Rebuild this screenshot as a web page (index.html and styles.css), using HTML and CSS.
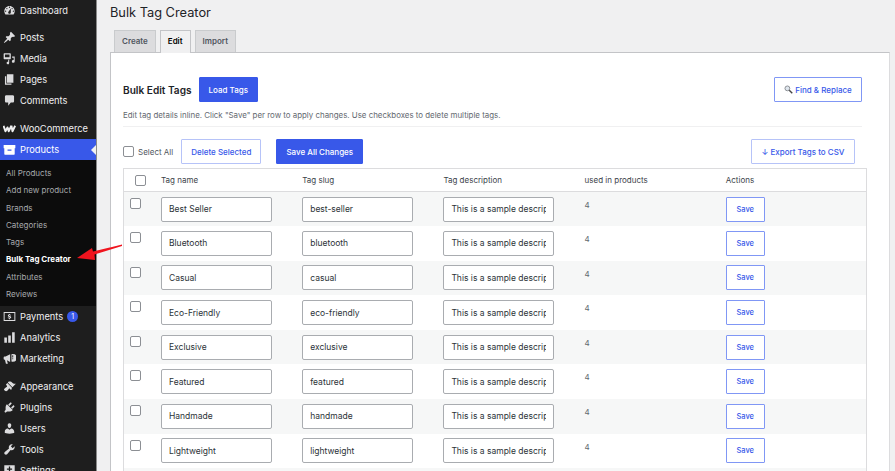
FILE: index.html
```html
<!DOCTYPE html>
<html lang="en">
<head>
    <meta charset="UTF-8">
    <meta name="viewport" content="width=device-width, initial-scale=1.0">
    <title>Bulk Tag Creator</title>
    <link rel="stylesheet" href="styles.css">
</head>
<body>
    <!-- Admin menu -->
    <nav class="sidebar">
        <ul class="menu">
            <li class="menu-item first">
                <svg class="icon" viewBox="0 0 20 20"><path fill-rule="evenodd" d="M3.76 16h12.48c1.1-1.37 1.76-3.11 1.76-5 0-4.42-3.58-8-8-8s-8 3.58-8 8c0 1.89.66 3.63 1.76 5zM10 4c.55 0 1 .45 1 1s-.45 1-1 1-1-.45-1-1 .45-1 1-1zM6 6c.55 0 1 .45 1 1s-.45 1-1 1-1-.45-1-1 .45-1 1-1zm8 0c.55 0 1 .45 1 1s-.45 1-1 1-1-.45-1-1 .45-1 1-1zm-5.37 5.55L12 7v6c0 1.1-.9 2-2 2s-2-.9-2-2c0-.57.24-1.08.63-1.45zM4 10c.55 0 1 .45 1 1s-.45 1-1 1-1-.45-1-1 .45-1 1-1zm12 0c.55 0 1 .45 1 1s-.45 1-1 1-1-.45-1-1 .45-1 1-1z"/></svg>
                Dashboard
            </li>
            <li class="menu-item gap">
                <svg class="icon" viewBox="0 0 20 20"><path d="M10.44 3.02l1.82-1.82 6.36 6.35-1.83 1.82c-1.05-.68-2.48-.57-3.41.36l-.75.75c-.92.93-1.04 2.35-.35 3.41l-1.83 1.82-2.41-2.41-2.8 2.79c-.42.42-3.38 2.71-3.8 2.29s1.86-3.39 2.28-3.81l2.79-2.79L4.1 9.36l1.83-1.82c1.05.69 2.48.57 3.4-.36l.75-.75c.93-.92 1.05-2.35.36-3.41z"/></svg>
                Posts
            </li>
            <li class="menu-item">
                <svg class="icon" viewBox="0 0 20 20"><path fill-rule="evenodd" d="M2 2h9a1 1 0 0 1 1 1v7a1 1 0 0 1-1 1H2a1 1 0 0 1-1-1V3a1 1 0 0 1 1-1zm1 2v4h7V4zM14 7h4v7.500a2.200 2.200 0 1 1-1.600-2.100V9H14zM9.500 12v5a2 2 0 1 1-1.500-1.900V12z"/></svg>
                Media
            </li>
            <li class="menu-item">
                <svg class="icon" viewBox="0 0 20 20"><path d="M6 15V2h10v13H6zm-1 1h8v2H3V5h2v11z"/></svg>
                Pages
            </li>
            <li class="menu-item">
                <svg class="icon" viewBox="0 0 20 20"><path d="M5 2h10c1.100 0 2 .9 2 2v7c0 1.100-.9 2-2 2h-3l-4 5v-5H5c-1.100 0-2-.9-2-2V4c0-1.100.9-2 2-2z"/></svg>
                Comments
            </li>
            <li class="menu-item gap">
                <svg class="icon" viewBox="0 0 24 24"><path d="M1 7l3.500 10 3.800-7 2.200 7 5-10M15.500 7l2 10 5-10" fill="none" stroke="#f0f0f1" stroke-width="3.600" stroke-linejoin="round"/></svg>
                WooCommerce
            </li>
            <li class="menu-item current">
                <svg class="icon" viewBox="0 0 20 20"><path fill-rule="evenodd" d="M1 3h18v5h-1v9a1 1 0 0 1-1 1H3a1 1 0 0 1-1-1V8H1zm6 7v2h6v-2z"/></svg>
                Products
            </li>
        </ul>

        <!-- Products submenu -->
        <ul class="submenu">
            <li>All Products</li>
            <li>Add new product</li>
            <li>Brands</li>
            <li>Categories</li>
            <li>Tags</li>
            <li class="active">Bulk Tag Creator</li>
            <li>Attributes</li>
            <li>Reviews</li>
        </ul>

        <ul class="menu">
            <li class="menu-item">
                <svg class="icon" viewBox="0 0 20 20"><path fill-rule="evenodd" d="M1 3h18v14H1zm1.500 1.500v11h15v-11zM9.300 6h1.400v1c.8.100 1.400.4 1.800.8l-.8 1c-.5-.4-1-.6-1.700-.6-.6 0-.9.200-.9.500 0 .4.400.5 1.300.7 1.300.3 2.200.7 2.200 1.900 0 1-.7 1.700-1.900 1.800v1H9.300v-1c-1-.1-1.700-.5-2.200-1l.8-1c.6.500 1.200.8 2 .8.600 0 1-.2 1-.6s-.4-.5-1.300-.7c-1.300-.3-2.100-.7-2.100-1.800 0-1 .7-1.700 1.800-1.800z"/></svg>
                Payments
                <span class="badge">1</span>
            </li>
            <li class="menu-item">
                <svg class="icon" viewBox="0 0 20 20"><path d="M18 18V2h-4v16h4zm-6 0V7H8v11h4zm-6 0v-8H2v8h4z"/></svg>
                Analytics
            </li>
            <li class="menu-item">
                <svg class="icon" viewBox="0 0 20 20"><path fill-rule="evenodd" d="M11 3.500L4 7H2.500A1.500 1.500 0 0 0 1 8.500v2A1.500 1.500 0 0 0 2.500 12H3l1.500 6h3L6 12.700l5 2.800zM15 3a6 6 0 0 1 0 12 6 6 0 0 1-2-.4V3.400A6 6 0 0 1 15 3zm-.7 2v3.500h1.400V5zm0 4.500V11h1.400V9.500z"/></svg>
                Marketing
            </li>
            <li class="menu-item gap">
                <svg class="icon" viewBox="0 0 20 20"><path d="M14.480 11.060L7.410 3.990l1.500-1.500c.5-.56 2.300-.47 3.510.32 1.210.8 1.430 1.280 2.910 2.100 1.180.64 2.450 1.260 4.450.85zm-.71.71L6.700 4.700 4.930 6.470c-.39.39-.39 1.020 0 1.410l1.060 1.060c.39.39.39 1.030 0 1.420-.6.6-1.430 1.110-2.210 1.690-.35.26-.7.53-1.010.84C1.430 13.230 1 14.690 2.620 16.300s2.870 1.200 4.200.02c.19-.18.39-.4.58-.6.6-.8 1.100-1.630 1.700-2.230.39-.39 1.030-.39 1.420 0l1.060 1.060c.39.39 1.020.39 1.410 0z"/></svg>
                Appearance
            </li>
            <li class="menu-item">
                <svg class="icon" viewBox="0 0 20 20"><path d="M13.110 4.360L9.870 7.600 8 5.730l3.240-3.240c.35-.34 1.050-.2 1.560.32.520.51.660 1.210.310 1.550zm-8 1.770l.91-1.120 9.010 9.010-1.190.84c-.71.71-2.630 1.160-3.820 1.160H6.140L4.900 17.260c-.59.59-1.540.59-2.120 0-.59-.58-.59-1.530 0-2.120l1.240-1.240v-3.880c0-1.130.4-3.190 1.090-3.890zm7.260 3.970l3.240-3.240c.34-.35 1.040-.21 1.550.31.520.51.660 1.210.310 1.550l-3.240 3.250z"/></svg>
                Plugins
            </li>
            <li class="menu-item">
                <svg class="icon" viewBox="0 0 20 20"><path d="M10 9.250c-2.270 0-2.730-3.440-2.730-3.440C7 4.020 7.820 2 9.970 2c2.160 0 2.980 2.020 2.710 3.810 0 0-.41 3.440-2.680 3.440zm0 2.570L12.720 10c2.390 0 4.520 2.330 4.520 4.530v2.490s-3.650 1.130-7.240 1.130c-3.650 0-7.240-1.130-7.240-1.130v-2.490c0-2.250 1.940-4.480 4.470-4.480z"/></svg>
                Users
            </li>
            <li class="menu-item">
                <svg class="icon" viewBox="0 0 20 20"><path d="M16.680 9.770c-1.340 1.340-3.300 1.670-4.950.99l-5.410 6.520c-.99.99-2.590.99-3.580 0s-.99-2.590 0-3.570l6.520-5.420c-.68-1.650-.35-3.610.99-4.950 1.280-1.280 3.120-1.620 4.720-1.060l-2.890 2.890 2.820 2.820 2.860-2.870c.53 1.580.18 3.390-1.080 4.650z"/></svg>
                Tools
            </li>
            <li class="menu-item">
                <svg class="icon" viewBox="0 0 20 20"><path fill-rule="evenodd" d="M2 2h16v16H2zm7 2v3H6v2h3v3h2V9h3V7h-3V4z"/></svg>
                Settings
            </li>
        </ul>
    </nav>

    <!-- Main Content -->
    <main class="content">
        <h1 class="page-title">Bulk Tag Creator</h1>

        <div class="tabs">
            <a class="tab">Create</a>
            <a class="tab tab-active">Edit</a>
            <a class="tab">Import</a>
        </div>

        <section class="panel">
            <div class="panel-head">
                <h2>Bulk Edit Tags</h2>
                <button class="btn btn-primary">Load Tags</button>
                <button class="btn btn-outline push-right find-btn">
                    <svg class="search-icon" viewBox="0 0 12 12"><circle cx="4.500" cy="4.500" r="3.200" fill="#dfe6ee" stroke="#8b8f94" stroke-width="1.300"/><path d="M7 7l4 4" stroke="#444" stroke-width="1.800"/></svg>
                    Find &amp; Replace
                </button>
            </div>
            <p class="hint">Edit tag details inline. Click "Save" per row to apply changes. Use checkboxes to delete multiple tags.</p>

            <div class="toolbar">
                <label class="select-all"><input type="checkbox" class="check"> Select All</label>
                <button class="btn btn-light">Delete Selected</button>
                <button class="btn btn-primary save-all">Save All Changes</button>
                <button class="btn btn-light push-right export-btn">↓ Export Tags to CSV</button>
            </div>

            <table class="tag-table">
                <thead>
                    <tr>
                        <th class="col-check"><input type="checkbox" class="check head-check"></th>
                        <th>Tag name</th>
                        <th>Tag slug</th>
                        <th>Tag description</th>
                        <th>used in products</th>
                        <th>Actions</th>
                    </tr>
                </thead>
                <tbody>
                    <tr>
                        <td class="col-check"><input type="checkbox" class="check"></td>
                        <td><input class="field" type="text" value="Best Seller"></td>
                        <td><input class="field" type="text" value="best-seller"></td>
                        <td><input class="field" type="text" value="This is a sample description"></td>
                        <td class="count">4</td>
                        <td><button class="btn-save">Save</button></td>
                    </tr>
                    <tr>
                        <td class="col-check"><input type="checkbox" class="check"></td>
                        <td><input class="field" type="text" value="Bluetooth"></td>
                        <td><input class="field" type="text" value="bluetooth"></td>
                        <td><input class="field" type="text" value="This is a sample description"></td>
                        <td class="count">4</td>
                        <td><button class="btn-save">Save</button></td>
                    </tr>
                    <tr>
                        <td class="col-check"><input type="checkbox" class="check"></td>
                        <td><input class="field" type="text" value="Casual"></td>
                        <td><input class="field" type="text" value="casual"></td>
                        <td><input class="field" type="text" value="This is a sample description"></td>
                        <td class="count">4</td>
                        <td><button class="btn-save">Save</button></td>
                    </tr>
                    <tr>
                        <td class="col-check"><input type="checkbox" class="check"></td>
                        <td><input class="field" type="text" value="Eco-Friendly"></td>
                        <td><input class="field" type="text" value="eco-friendly"></td>
                        <td><input class="field" type="text" value="This is a sample description"></td>
                        <td class="count">4</td>
                        <td><button class="btn-save">Save</button></td>
                    </tr>
                    <tr>
                        <td class="col-check"><input type="checkbox" class="check"></td>
                        <td><input class="field" type="text" value="Exclusive"></td>
                        <td><input class="field" type="text" value="exclusive"></td>
                        <td><input class="field" type="text" value="This is a sample description"></td>
                        <td class="count">4</td>
                        <td><button class="btn-save">Save</button></td>
                    </tr>
                    <tr>
                        <td class="col-check"><input type="checkbox" class="check"></td>
                        <td><input class="field" type="text" value="Featured"></td>
                        <td><input class="field" type="text" value="featured"></td>
                        <td><input class="field" type="text" value="This is a sample description"></td>
                        <td class="count">4</td>
                        <td><button class="btn-save">Save</button></td>
                    </tr>
                    <tr>
                        <td class="col-check"><input type="checkbox" class="check"></td>
                        <td><input class="field" type="text" value="Handmade"></td>
                        <td><input class="field" type="text" value="handmade"></td>
                        <td><input class="field" type="text" value="This is a sample description"></td>
                        <td class="count">4</td>
                        <td><button class="btn-save">Save</button></td>
                    </tr>
                    <tr>
                        <td class="col-check"><input type="checkbox" class="check"></td>
                        <td><input class="field" type="text" value="Lightweight"></td>
                        <td><input class="field" type="text" value="lightweight"></td>
                        <td><input class="field" type="text" value="This is a sample description"></td>
                        <td class="count">4</td>
                        <td><button class="btn-save">Save</button></td>
                    </tr>
                    <tr>
                        <td colspan="6" class="row-more"></td>
                    </tr>
                </tbody>
            </table>
        </section>
    </main>

    <!-- Red annotation arrow over the screenshot -->
    <svg class="annotation" viewBox="0 0 48 18"><path d="M1 15L16 5l1 3.500L46 1.500V3L18.500 11.500 19 17z" fill="#f0141e"/></svg>
</body>
</html>
```

FILE: styles.css
```css
/* General Styles */
* {
    margin: 0;
    padding: 0;
    box-sizing: border-box;
}

html, body {
    height: 471px;
    overflow: hidden;
}

body {
    display: flex;
    position: relative;
    background: #f0f0f1;
    font-family: Inter, "Liberation Sans", sans-serif;
    color: #3c434a;
}

/* Admin menu */
.sidebar {
    width: 97px;
    flex-shrink: 0;
    height: 471px;
    overflow: hidden;
    background: #1e1e1e;
    border-right: 1px solid #8a8a8a;
}

.sidebar ul {
    list-style: none;
}

.menu-item {
    display: flex;
    align-items: center;
    height: 21px;
    padding-left: 3px;
    position: relative;
    font-size: 9.300px;
    color: #f0f0f1;
}

.menu-item.gap {
    margin-top: 7px;
}

.menu-item.first {
    height: 20px;
}

.icon {
    width: 13px;
    height: 13px;
    margin-right: 4px;
    flex-shrink: 0;
    fill: #dcdcde;
}

.menu-item.current {
    background: #3858e9;
    color: #fff;
}

.menu-item.current .icon {
    fill: #fff;
}

/* little notch pointing at the content */
.menu-item.current::after {
    content: "";
    position: absolute;
    right: 0;
    top: 5.500px;
    border: 5px solid transparent;
    border-right-color: #f0f0f1;
    border-left-width: 0;
}

.badge {
    display: block;
    width: 11px;
    height: 11px;
    margin-left: 4px;
    border-radius: 50%;
    background: #3858e9;
    color: #fff;
    font-size: 7px;
    line-height: 11px;
    text-align: center;
}

.submenu {
    background: #0c0c0c;
    padding: 5px 0 3px;
}

.submenu li {
    height: 17.300px;
    line-height: 17.300px;
    padding-left: 6px;
    font-size: 8px;
    color: #a7aaad;
}

.submenu li.active {
    color: #fff;
    font-weight: 700;
}

/* Page content */
.content {
    flex: 1;
    min-width: 0;
    padding: 0 5px 0 13px;
}

.page-title {
    font-size: 12.800px;
    font-weight: 400;
    line-height: 18px;
    padding-top: 4px;
    color: #1d2327;
}

.tabs {
    display: flex;
    gap: 4px;
    margin: 8px 0 0 4px;
    height: 22px;
}

.tab {
    display: block;
    padding: 0 7px;
    font-size: 8px;
    font-weight: 600;
    line-height: 21px;
    background: #dcdcde;
    border: 1px solid #c9cbcd;
    border-bottom: none;
    color: #50575e;
}

.tab-active {
    background: #f0f0f1;
    color: #000;
    border-color: #c3c4c7;
    height: 23px;
    position: relative;
    z-index: 1;
}

.panel {
    background: #fff;
    border: 1px solid #c3c4c7;
    border-right-color: #dcdcde;
    padding: 24px 27px 0 12px;
    height: 450px;
    overflow: hidden;
}

.panel-head {
    display: flex;
    align-items: center;
    gap: 7px;
}

.panel-head h2 {
    font-size: 10.100px;
    font-weight: 600;
    color: #1d2327;
}

.push-right {
    margin-left: auto;
}

/* Buttons */
.btn {
    height: 25px;
    font-family: inherit;
    font-size: 8px;
    font-weight: 500;
    border-radius: 1px;
    padding: 0 9px;
    white-space: nowrap;
    cursor: pointer;
}

.btn-primary {
    background: #3858e9;
    border: 1px solid #3858e9;
    color: #fff;
}

.btn-outline {
    background: #fff;
    border: 1px solid #8097f5;
    color: #3858e9;
}

.btn-light {
    background: #fff;
    border: 1px solid #b6c3f8;
    color: #3858e9;
}

.find-btn {
    display: flex;
    align-items: center;
    gap: 2px;
    width: 88px;
    padding: 0;
    justify-content: center;
}

.search-icon {
    width: 9px;
    height: 9px;
}

.hint {
    margin-top: 8px;
    padding-bottom: 6px;
    border-bottom: 1px solid #f0f0f1;
    font-size: 7.900px;
    color: #646970;
}

.toolbar {
    display: flex;
    align-items: center;
    margin-top: 12px;
}

.select-all {
    display: flex;
    align-items: center;
    gap: 4px;
    font-size: 8px;
    color: #50575e;
    margin-right: 8px;
}

.save-all {
    margin-left: 15px;
}

.export-btn {
    margin-right: 7px;
    width: 104px;
    padding: 0;
}

.check {
    appearance: none;
    width: 11px;
    height: 11px;
    background: #fff;
    border: 1px solid #8c8f94;
    border-radius: 2px;
    display: block;
}

/* Tag table */
.tag-table {
    width: 100%;
    margin-top: 4px;
    border-collapse: collapse;
    table-layout: fixed;
    border: 1px solid #dcdcde;
}

.tag-table th {
    height: 23px;
    text-align: left;
    font-size: 8px;
    font-weight: 400;
    color: #3c434a;
    border-bottom: 1px solid #dcdcde;
}

.tag-table th:first-child,
.tag-table td:first-child {
    width: 37.500px;
}

.tag-table th:nth-child(n+2) {
    width: 141.200px;
}

.tag-table tbody tr:nth-child(odd) {
    background: #f6f7f7;
}

.tag-table td {
    height: 34.600px;
    vertical-align: middle;
}

td.col-check {
    vertical-align: top;
    padding: 6px 0 0 6px;
}

th.col-check .check {
    margin-left: 11px;
}

td.count {
    vertical-align: top;
    padding-top: 8px;
    font-size: 8px;
    color: #646970;
}

.field {
    display: block;
    width: 111px;
    height: 25px;
    padding: 0 7px;
    font-family: inherit;
    font-size: 8.500px;
    color: #2c3338;
    background: #fff;
    border: 1px solid #a9acb0;
    border-radius: 2px;
}

.btn-save {
    display: block;
    width: 39px;
    height: 25px;
    background: #fff;
    border: 1px solid #8097f5;
    border-radius: 1px;
    font-family: inherit;
    font-size: 7.500px;
    font-weight: 500;
    color: #3858e9;
}

/* Annotation */
.annotation {
    position: absolute;
    left: 76px;
    top: 243px;
    width: 48px;
    height: 18px;
}
```
